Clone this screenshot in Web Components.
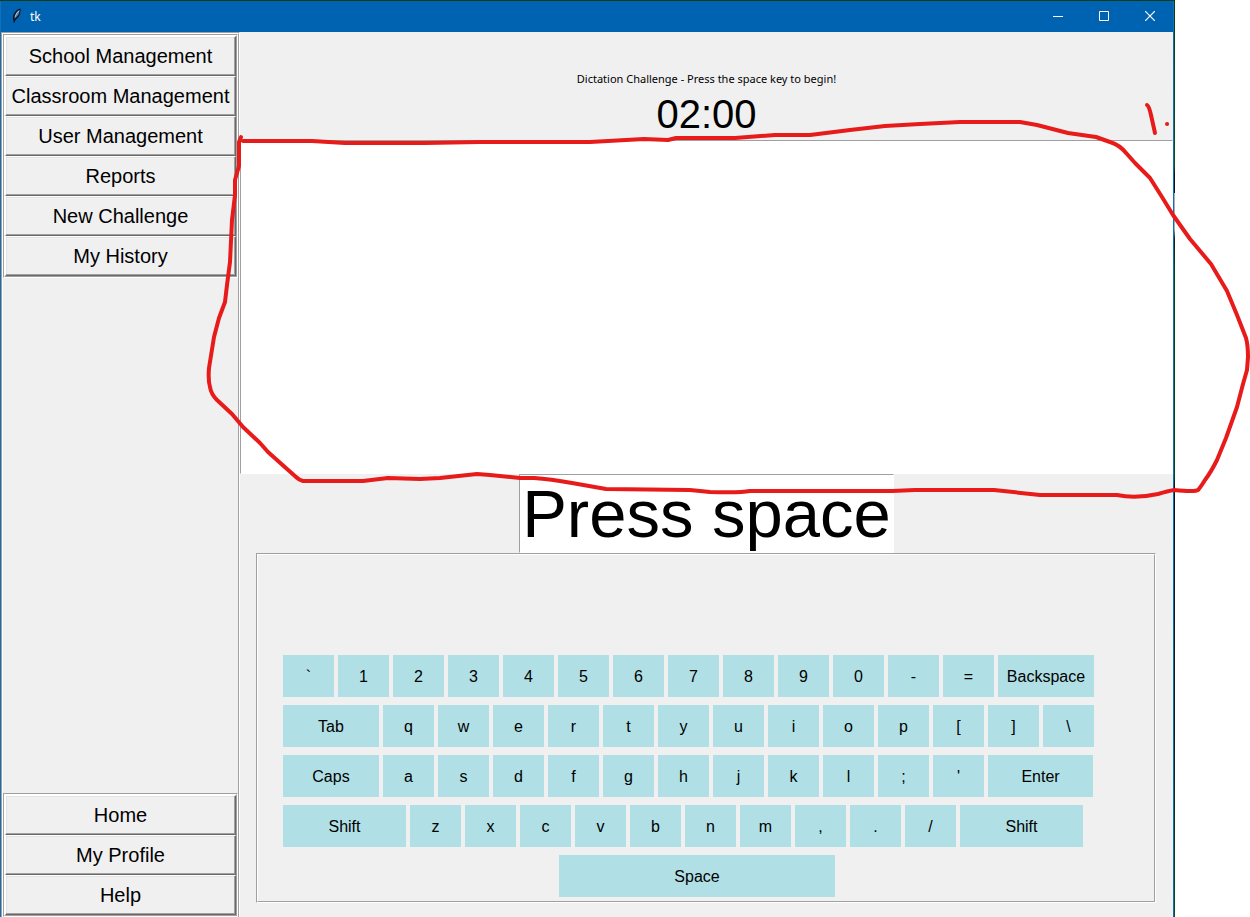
<!DOCTYPE html>
<html lang="en">
<head>
<meta charset="utf-8">
<title>tk</title>
<style>
html,body{margin:0;height:100%;background:#fff;overflow:hidden}
body{font-family:"Liberation Sans",Arial,sans-serif;color:#000}
</style>
</head>
<body>
<tk-desktop>
  <tk-window>
    <tk-titlebar slot="title">tk</tk-titlebar>
    <tk-sidebar slot="side">
      <tk-menu items="School Management|Classroom Management|User Management|Reports|New Challenge|My History"></tk-menu>
      <tk-menu items="Home|My Profile|Help"></tk-menu>
    </tk-sidebar>
    <tk-challenge>
      <tk-keyboard></tk-keyboard>
    </tk-challenge>
  </tk-window>
  <ink-notes slot="ink"></ink-notes>
</tk-desktop>
<script>
const define=(name,html,setup)=>{
  const t=document.createElement('template');
  t.innerHTML='<style>*{box-sizing:border-box}</style>'+html;
  customElements.define(name,class extends HTMLElement{
    constructor(){
      super();
      this.attachShadow({mode:'open'}).append(t.content.cloneNode(true));
    }
    connectedCallback(){ if(setup&&!this.ready){this.ready=true;setup(this,this.shadowRoot);} }
  });
};

define('tk-desktop',`<style>
:host{display:block;position:relative;height:100%;min-height:700px;padding-right:75px}
.wall{height:100%;padding:1px 1px 0 0;background:linear-gradient(#0b3d12,#124d18 18%,#06131a 19%,#06131a 21%,#a8b0b4 21%,#a8b0b4 25%,#0a1f18 26%,#0b4512 30%,#0b4512 52%,#06131a 53%,#0a1f18 80%,#0c4a1c)}
</style><div class="wall"><slot></slot></div><slot name="ink"></slot>`);

define('tk-window',`<style>
:host{display:grid;grid-template:31px minmax(0,1fr)/239px minmax(0,1fr);height:100%;background:#f0f0f0;border:solid #146db8;border-width:0 1px}
slot[name=title]::slotted(*){grid-column:1/-1}
</style><slot name="title"></slot><slot name="side"></slot><slot></slot>`);

define('tk-titlebar',`<style>
:host{display:flex;align-items:center;background:#0063b1;color:#fff;font:12px/16px "Noto Sans",sans-serif}
.feather{width:16px;height:16px;margin:0 5px 2px 8px}
span{flex:1}
button{align-self:flex-start;width:46px;height:30px;border:0;padding:0;background:none;display:grid;place-items:center}
button svg{fill:none;stroke:#fff}
</style>
<svg class="feather" viewBox="0 0 16 16"><path d="M11.500 .5C7 1.500 3.500 6 4 11L5 15.500L6.500 12C10 9.500 12 5 11.500 .5Z" fill="#0a1420"/><path d="M10.500 2C7.500 3.500 5.500 7 5.500 10.500C8.500 8.500 10.500 5.500 10.500 2Z" fill="#9cc7ec"/><path d="M9.500 4L6 11" stroke="#13365c" stroke-width=".6"/></svg>
<span><slot></slot></span>
<button aria-label="Minimize"><svg width="10" height="10"><path d="M0 5.500H10"/></svg></button>
<button aria-label="Maximize"><svg width="10" height="10"><path d="M.5.5H9.500V9.500H.5Z"/></svg></button>
<button aria-label="Close"><svg width="10" height="10"><path d="M0 0L10 10M10 0L0 10" stroke-width="1.200"/></svg></button>`);

const groove='border:1px solid;border-color:#a0a0a0 #fff #fff #a0a0a0';
const grooveIn='border:1px solid;border-color:#fff #a0a0a0 #a0a0a0 #fff';

define('tk-sidebar',`<style>
:host{display:block;${groove};border-bottom:0}
nav{height:100%;${grooveIn};border-bottom:0;display:flex;flex-direction:column;justify-content:space-between}
</style><nav><slot></slot></nav>`);

define('tk-menu',`<style>
:host{display:block;${groove}}
div{${grooveIn};display:flex;flex-direction:column}
button{height:40px;padding:0;background:#f0f0f0;border:1px solid;border-color:#fff #696969 #696969 #fff;box-shadow:inset -1px -1px #a0a0a0,inset 1px 1px #e3e3e3;font:20px/24px "Liberation Sans",Arial,sans-serif;color:#000}
</style><div></div>`,(el,root)=>{
  const box=root.querySelector('div');
  for(const label of el.getAttribute('items').split('|')){
    const b=document.createElement('button');b.textContent=label;box.append(b);
  }
});

define('tk-challenge',`<style>
:host{display:flex;flex-direction:column;align-items:center;min-width:0}
header{height:108px;padding-top:38px;text-align:center}
p{margin:0;font:11px/18px "Noto Sans",sans-serif}
time{display:block;font-size:40px;line-height:52px}
textarea,input{background:#fff;${groove};border-radius:0;outline:0;color:#000;font-family:inherit}
textarea{flex:1;width:100%;min-height:80px;resize:none;font-size:20px}
input{width:375px;height:79px;padding:0 1px;font-size:67px;text-align:center;flex:none}
.board{align-self:stretch;margin:0 17px 14px 16px}
</style>
<header><p>Dictation Challenge - Press the space key to begin!</p><time>02:00</time></header>
<textarea aria-label="Dictation text"></textarea>
<input aria-label="Next word" value="Press space">
<div class="board"><slot></slot></div>`);

define('tk-keyboard',`<style>
:host{display:block;${groove}}
.in{${grooveIn};padding:100px 25px 4px;display:grid;gap:8px;overflow:hidden}
.row{display:flex;gap:4px}
.row:last-child{padding-left:276px}
button{flex:none;width:51px;height:42px;border:0;padding:2px 0 0;background:#b0e0e6;color:#000;font:16px/20px "Liberation Sans",Arial,sans-serif}
.w2{width:96px}.enter{width:105px}.shift{width:123px}.space{width:276px}
</style><div class="in"></div>`,(el,root)=>{
  const rows=['\x60 1 2 3 4 5 6 7 8 9 0 - = Backspace','Tab q w e r t y u i o p [ ] \\','Caps a s d f g h j k l ; \' Enter','Shift z x c v b n m , . / Shift','Space'];
  const size={Backspace:'w2',Tab:'w2',Caps:'w2',Enter:'enter',Shift:'shift',Space:'space'};
  for(const keys of rows){
    const r=document.createElement('div');r.className='row';
    for(const k of keys.split(' ')){
      const b=document.createElement('button');b.textContent=k;b.className=size[k]||'';r.append(b);
    }
    root.querySelector('.in').append(r);
  }
});

define('ink-notes',`<style>
:host{position:absolute;left:0;top:0;pointer-events:none}
svg{display:block;fill:none;stroke:#e81b1b;stroke-width:4;stroke-linecap:round;stroke-linejoin:round}
</style>
<svg width="1250" height="917" viewBox="0 0 1250 917" aria-hidden="true">
<path d="M243 141H312L345 143H425L480 142H590L644 139L668 140L676 138L735 138L775 135L810 135L850 130L885 126L920 124L960 122H1020L1037 125L1068 133L1096 137L1110 142Q1120 145 1127 154L1135 163L1150 178L1162 197L1173 215L1190 239L1211 264L1227 291L1237 315L1246 338Q1248 345 1248 357L1247 370L1243 384L1237 407L1226 438L1217 460Q1211 472 1205 480Q1200 488 1198 490Q1195 492 1174 490Q1168 491 1158 494Q1135 499 1117 495H1040L994 490H915L892 491L750 491Q740 493 710 492L690 490L606 489L572 483Q550 479 534 478L520 478L490 475L477 474L440 478L420 479L388 478L363 481H303Q299 480 296 477L268 452L260 443L243 427L232 414L217 400Q211 394 210 387Q208 380 209 368L214 337L219 318L225 302L227 285L230 262L232 220L235 195V180L239 166V142L241 137"/>
<path d="M1147 105Q1149 106 1151 115L1155 133"/><path d="M1167 124H1167.100"/>
</svg>`);
</script>
</body>
</html>
